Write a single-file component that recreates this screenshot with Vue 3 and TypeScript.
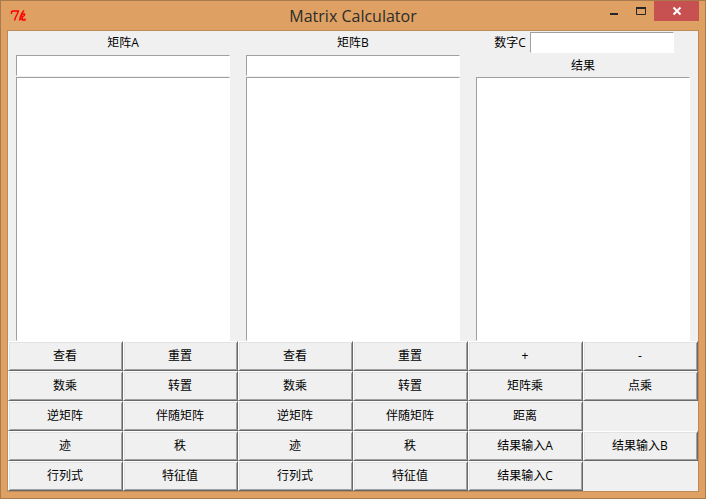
<script setup lang="ts">
import { ref } from 'vue'

interface Action {
  label: string
  group: string
}

const entryA = ref('')
const entryB = ref('')
const numberC = ref('')
const matrixA = ref('')
const matrixB = ref('')
const result = ref('')

const unary: [string, string][] = [
  ['查看', '重置'],
  ['数乘', '转置'],
  ['逆矩阵', '伴随矩阵'],
  ['迹', '秩'],
  ['行列式', '特征值'],
]

const binary: (string | null)[][] = [
  ['+', '-'],
  ['矩阵乘', '点乘'],
  ['距离', null],
  ['结果输入A', '结果输入B'],
  ['结果输入C', null],
]

const cells: (Action | null)[] = unary.flatMap((pair, row) => [
  ...pair.map((label) => ({ label, group: 'A' })),
  ...pair.map((label) => ({ label, group: 'B' })),
  ...binary[row].map((label) => (label ? { label, group: 'C' } : null)),
])
</script>

<template>
  <div class="window">
    <header class="titlebar">
      <svg class="logo" viewBox="0 0 16 12" aria-hidden="true">
        <path d="M1.5 4V1.5L3 1H9M8.5 1L7 4.5L5.5 7.5L4.5 10.5M14 .5L12 3L10.5 6.5L9.5 10.5M11 6.5L12.5 4H14.5V5.5L11.5 7.5M10 9H12.5V10H15V8.5M12.5 7V9" />
      </svg>
      <h1 class="title">Matrix Calculator</h1>
      <div class="controls">
        <button class="control minimize" type="button" aria-label="Minimize">
          <svg viewBox="0 0 10 10"><path d="M1 8H9" /></svg>
        </button>
        <button class="control maximize" type="button" aria-label="Maximize">
          <svg viewBox="0 0 10 10"><path d="M0 2H10" /><path class="thin" d="M.5 2V8.5H9.5V2" /></svg>
        </button>
        <button class="control close" type="button" aria-label="Close">
          <svg viewBox="0 0 10 10"><path d="M1.5 1.5L8.5 8.5M8.5 1.5L1.5 8.5" /></svg>
        </button>
      </div>
    </header>

    <main class="client">
      <div class="panels">
        <section class="panel">
          <label id="label-a" class="caption" for="entry-a">矩阵A</label>
          <input id="entry-a" v-model="entryA" class="field" type="text" />
          <textarea v-model="matrixA" class="field area" aria-labelledby="label-a"></textarea>
        </section>
        <section class="panel">
          <label id="label-b" class="caption" for="entry-b">矩阵B</label>
          <input id="entry-b" v-model="entryB" class="field" type="text" />
          <textarea v-model="matrixB" class="field area" aria-labelledby="label-b"></textarea>
        </section>
        <section class="panel">
          <div class="number">
            <label for="number-c">数字C</label>
            <input id="number-c" v-model="numberC" class="field" type="text" />
          </div>
          <label class="caption result" for="result">结果</label>
          <textarea id="result" v-model="result" class="field area"></textarea>
        </section>
      </div>

      <div class="keys">
        <template v-for="(cell, i) in cells" :key="i">
          <button v-if="cell" class="key" type="button" :data-group="cell.group">{{ cell.label }}</button>
          <span v-else></span>
        </template>
      </div>
    </main>
  </div>
</template>

<style>
body {
  margin: 0;
}
</style>

<style scoped>
.window {
  box-sizing: border-box;
  display: flex;
  flex-direction: column;
  min-height: 100vh;
  padding: 0 6px 6px;
  border: 1px solid #a97a4b;
  background: #dea163;
  color: #000;
  font: 12px/16px "Open Sans", "Noto Sans CJK SC", sans-serif;
}

.titlebar {
  display: grid;
  grid-template-columns: 1fr auto 1fr;
  align-items: start;
  height: 29px;
}

.logo {
  width: 16px;
  height: 12px;
  margin: 9px 0 0 3px;
  fill: none;
  stroke: #f00;
  stroke-width: 1.4;
}

.title {
  margin: 5px 0 0;
  color: #2c2c2c;
  font: 400 16px/20px "Open Sans", sans-serif;
}

.controls {
  display: flex;
  justify-content: flex-end;
}

.control {
  display: flex;
  align-items: center;
  justify-content: center;
  width: 27px;
  height: 20px;
  padding: 0;
  border: 0;
  background: transparent;
}

.control svg {
  width: 10px;
  height: 10px;
  fill: none;
  stroke: #262626;
  stroke-width: 2;
}

.control .thin {
  stroke-width: 1;
}

.control.close {
  width: 45px;
  background: #c75050;
}

.control.close svg {
  stroke: #fff;
}

.client {
  display: flex;
  flex: 1;
  flex-direction: column;
  border: 1px solid #bc8a54;
  background: #f0f0f0;
}

.panels {
  display: grid;
  flex: 1;
  grid-template-columns: repeat(3, 1fr);
}

.panel {
  display: flex;
  flex-direction: column;
  padding: 0 8px;
}

.caption {
  padding: 4px 0;
  text-align: center;
}

.field {
  box-sizing: border-box;
  width: 100%;
  height: 21px;
  margin: 0;
  padding: 1px 2px;
  border: 1px solid;
  border-color: #a0a0a0 #fff #fff #a0a0a0;
  border-radius: 0;
  outline: 0;
  background: #fff;
  font: inherit;
}

.area {
  flex: 1;
  min-height: 120px;
  margin-top: 1px;
  resize: none;
}

.number {
  display: flex;
  align-items: center;
  justify-content: center;
  gap: 4px;
  padding: 1px 0 0 2px;
}

.number .field {
  width: 144px;
}

.result {
  padding: 5px 0 2px;
}

.keys {
  display: grid;
  grid-template-columns: repeat(6, 1fr);
  grid-auto-rows: 30px;
}

.key {
  min-width: 0;
  margin: 0;
  padding: 0 1px 0 0;
  border: 1px solid;
  border-color: #fff #696969 #696969 #fff;
  border-radius: 0;
  background: #f0f0f0;
  box-shadow: inset 1px 1px #e3e3e3, inset -1px -1px #a0a0a0;
  color: #000;
  font: inherit;
}
</style>
